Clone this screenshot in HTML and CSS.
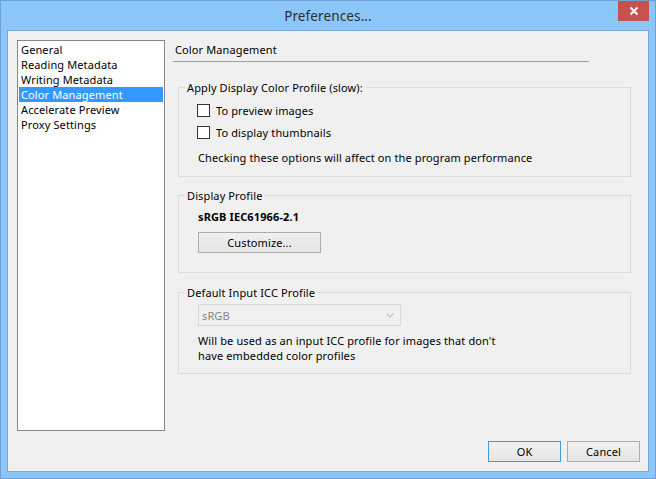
FILE: index.html
```html
<!DOCTYPE html>
<html lang="en">
<head>
  <meta charset="UTF-8">
  <meta name="viewport" content="width=device-width, initial-scale=1.0">
  <title>Preferences...</title>
  <link rel="stylesheet" href="styles.css">
</head>
<body>
  <div class="window">
    <div class="titlebar">
      <span></span>
      <span class="title">Preferences...</span>
      <button class="close-btn" aria-label="Close">
        <svg width="10" height="10" viewBox="0 0 10 10">
          <path d="M1.5 1.5 L8.5 8.5 M8.5 1.5 L1.5 8.5" stroke="#fff" stroke-width="2" fill="none"/>
        </svg>
      </button>
    </div>

    <div class="client">
      <ul class="nav-list">
        <li>General</li>
        <li>Reading Metadata</li>
        <li>Writing Metadata</li>
        <li class="selected">Color Management</li>
        <li>Accelerate Preview</li>
        <li>Proxy Settings</li>
      </ul>

      <div class="page">
        <div class="page-title">Color Management</div>

        <fieldset class="group group-apply">
          <legend>Apply Display Color Profile (slow):</legend>
          <div class="group-body">
            <label class="check-row"><input type="checkbox" class="check"> To preview images</label>
            <label class="check-row"><input type="checkbox" class="check"> To display thumbnails</label>
            <p class="note">Checking these options will affect on the program performance</p>
          </div>
        </fieldset>

        <fieldset class="group group-display">
          <legend>Display Profile</legend>
          <div class="group-body">
            <div class="profile-name">sRGB IEC61966-2.1</div>
            <button class="btn btn-customize">Customize...</button>
          </div>
        </fieldset>

        <fieldset class="group group-input">
          <legend>Default Input ICC Profile</legend>
          <div class="group-body">
            <div class="combo disabled">
              <span>sRGB</span>
              <svg width="8" height="5" viewBox="0 0 8 5">
                <path d="M0.5 0.5 L4 4 L7.5 0.5" stroke="#c2c2c2" stroke-width="1.2" fill="none"/>
              </svg>
            </div>
            <p class="note">Will be used as an input ICC profile for images that don't<br>have embedded color profiles</p>
          </div>
        </fieldset>
      </div>

      <div class="dialog-buttons">
        <button class="btn btn-default">OK</button>
        <button class="btn">Cancel</button>
      </div>
    </div>
  </div>
</body>
</html>
```

FILE: styles.css
```css
* {
  box-sizing: border-box;
}

body {
  margin: 0;
  font-family: "Noto Sans", sans-serif;
  font-size: 11px;
  letter-spacing: 0.12px;
  line-height: 15px;
  color: #000;
}

.window {
  width: 656px;
  height: 479px;
  border: 1px solid #6f9fd6;
  background-color: #8bc6f8;
  display: flex;
  flex-direction: column;
}

.titlebar {
  height: 29px;
  display: grid;
  grid-template-columns: 1fr auto 1fr;
  align-items: center;
}

.title {
  font-size: 13.5px;
  line-height: 18px;
  color: #2d2d2d;
}

.close-btn {
  justify-self: end;
  align-self: start;
  margin-right: 6px;
  width: 31px;
  height: 20px;
  border: 0;
  padding: 0;
  background-color: #c75050;
  display: flex;
  align-items: center;
  justify-content: center;
}

.client {
  flex-grow: 1;
  margin: 0 6px 6px;
  border: 1px solid #7aa7d8;
  background-color: #f0f0f0;
  padding: 9px 8px 9px 9px;
  display: grid;
  grid-template-columns: 148px 1fr;
  grid-template-rows: 1fr auto;
  column-gap: 8px;
  row-gap: 10px;
}

.nav-list {
  margin: 0;
  padding: 1px;
  list-style: none;
  background-color: #fff;
  border: 1px solid #828790;
}

.nav-list li {
  padding: 0 2px;
  white-space: nowrap;
}

.nav-list li.selected {
  background-color: #3399ff;
  color: #fff;
}

.page {
  display: flex;
  flex-direction: column;
  align-items: flex-start;
}

.page-title {
  width: 416px;
  padding: 2px 2px 4px;
  border-bottom: 1px solid #a0a0a0;
}

.group {
  margin: 0 0 0 5px;
  width: 453px;
  min-inline-size: 0;
  border: 1px solid #dcdcdc;
  padding: 0 0 0 6px;
}

.group legend {
  padding: 0 2px;
}

.group-body {
  padding-left: 12px;
}

.group-apply {
  margin-top: 18px;
  padding-top: 4px;
  padding-bottom: 11px;
}

.group-display {
  margin-top: 11px;
  padding-top: 6px;
  padding-bottom: 19px;
}

.group-input {
  margin-top: 12px;
  padding-top: 4px;
  padding-bottom: 10px;
}

.check-row {
  height: 22px;
  display: flex;
  align-items: center;
  gap: 6px;
}

.check {
  appearance: none;
  margin: 0;
  width: 13px;
  height: 13px;
  border: 1px solid #333;
  background-color: #fff;
}

.note {
  margin: 7px 0 0 1px;
}

.profile-name {
  font-weight: bold;
  padding-left: 1px;
}

.btn {
  font-family: inherit;
  font-size: 11px;
  letter-spacing: 0.12px;
  line-height: 15px;
  color: #000;
  height: 21px;
  padding: 0;
  border: 1px solid #adadad;
  background: linear-gradient(#f0f0f0, #e5e5e5);
}

.btn-customize {
  margin: 8px 0 0 1px;
  width: 123px;
}

.combo {
  margin-left: 1px;
  width: 203px;
  height: 22px;
  border: 1px solid #d9d9d9;
  background-color: #f0f0f0;
  display: flex;
  align-items: center;
  justify-content: space-between;
  padding: 0 6px 0 3px;
}

.combo.disabled {
  color: #838383;
}

.dialog-buttons {
  grid-column: 1 / 3;
  display: flex;
  justify-content: flex-end;
  gap: 6px;
}

.dialog-buttons .btn {
  width: 73px;
}

.btn-default {
  border-color: #3c9be8;
}
```
